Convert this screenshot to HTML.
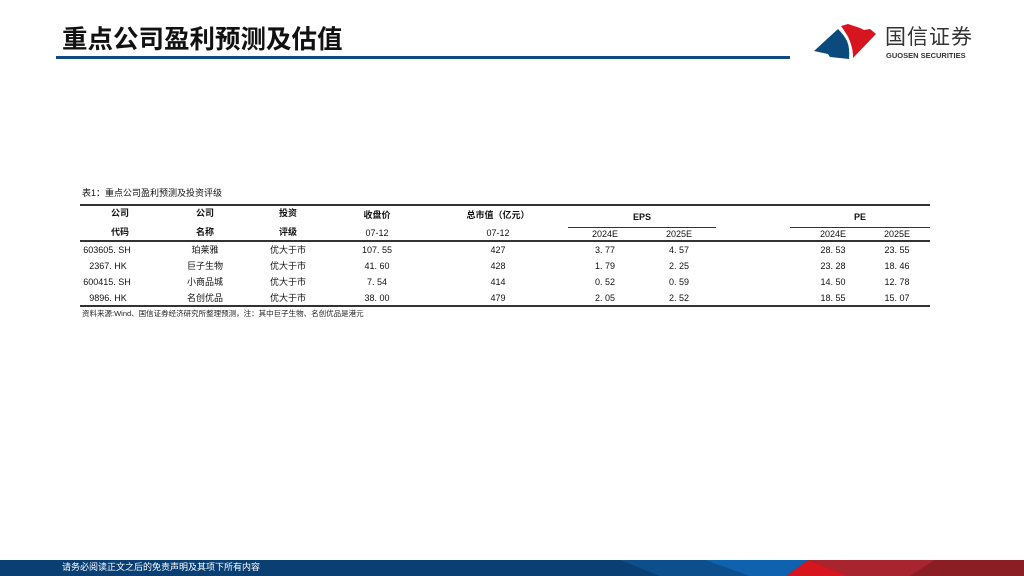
<!DOCTYPE html>
<html><head><meta charset="utf-8"><style>
body{margin:0;width:1024px;height:576px;position:relative;background:#fff;overflow:hidden;font-family:"Liberation Sans","Noto Sans CJK SC",sans-serif;}
.abs{position:absolute}
.t{position:absolute;font-size:9px;color:#111;transform:translateX(-50%);white-space:nowrap;line-height:10px}
.b{font-weight:bold}
.ln{position:absolute;background:#333}
</style></head><body>
<div class="abs" style="left:62px;top:22px;font-size:25.5px;font-weight:bold;color:#111;line-height:32px;font-family:'Noto Sans CJK SC',sans-serif;">重点公司盈利预测及估值</div>
<div class="abs" style="left:56px;top:56px;width:734px;height:3px;background:#0d4a80"></div>
<svg class="abs" style="left:805px;top:15px" width="80" height="50" viewBox="0 0 80 50">
<path d="M9 36 L33 14 Q39 20 42 26 Q45 33 44 44 L25 42 L23 39 Z" fill="#0b4a7d"/>
<path d="M36 11 L43 9 L55 13 L59 15 L65 14 L71 19 L48 43 Q48 37 47 33 Q45 25 42 20 Q39 15 36 11 Z" fill="#d7151f"/>
</svg>
<div class="abs" style="left:885px;top:23px;font-size:21px;color:#333;letter-spacing:1px;font-family:'Noto Sans CJK SC',sans-serif;line-height:26px">国信证券</div>
<div class="abs" style="left:886px;top:51px;font-size:7.5px;font-weight:bold;color:#333;line-height:9px">GUOSEN SECURITIES</div>

<div class="abs" style="left:82px;top:188px;font-size:9px;color:#111;line-height:10px">表1：重点公司盈利预测及投资评级</div>
<div class="ln" style="left:80px;top:204px;width:850px;height:1.5px"></div>
<div class="ln" style="left:568px;top:227px;width:148px;height:1px"></div>
<div class="ln" style="left:790px;top:227px;width:140px;height:1px"></div>
<div class="ln" style="left:80px;top:240px;width:850px;height:1.5px"></div>
<div class="ln" style="left:80px;top:305px;width:850px;height:1.5px"></div>

<div class="t b" style="left:120px;top:208px">公司</div><div class="t b" style="left:120px;top:227px">代码</div>
<div class="t b" style="left:205px;top:208px">公司</div><div class="t b" style="left:205px;top:227px">名称</div>
<div class="t b" style="left:288px;top:208px">投资</div><div class="t b" style="left:288px;top:227px">评级</div>
<div class="t b" style="left:377px;top:210px">收盘价</div><div class="t" style="left:377px;top:228px">07-12</div>
<div class="t b" style="left:498px;top:210px">总市值（亿元）</div><div class="t" style="left:498px;top:228px">07-12</div>
<div class="t b" style="left:642px;top:212px">EPS</div>
<div class="t b" style="left:860px;top:212px">PE</div>
<div class="t" style="left:605px;top:229px">2024E</div><div class="t" style="left:679px;top:229px">2025E</div>
<div class="t" style="left:833px;top:229px">2024E</div><div class="t" style="left:897px;top:229px">2025E</div>

<div class="t" style="left:107px;top:245px">603605. SH</div><div class="t" style="left:205px;top:245px">珀莱雅</div><div class="t" style="left:288px;top:245px">优大于市</div><div class="t" style="left:377px;top:245px">107. 55</div><div class="t" style="left:498px;top:245px">427</div><div class="t" style="left:605px;top:245px">3. 77</div><div class="t" style="left:679px;top:245px">4. 57</div><div class="t" style="left:833px;top:245px">28. 53</div><div class="t" style="left:897px;top:245px">23. 55</div>
<div class="t" style="left:108px;top:261px">2367. HK</div><div class="t" style="left:205px;top:261px">巨子生物</div><div class="t" style="left:288px;top:261px">优大于市</div><div class="t" style="left:377px;top:261px">41. 60</div><div class="t" style="left:498px;top:261px">428</div><div class="t" style="left:605px;top:261px">1. 79</div><div class="t" style="left:679px;top:261px">2. 25</div><div class="t" style="left:833px;top:261px">23. 28</div><div class="t" style="left:897px;top:261px">18. 46</div>
<div class="t" style="left:107px;top:277px">600415. SH</div><div class="t" style="left:205px;top:277px">小商品城</div><div class="t" style="left:288px;top:277px">优大于市</div><div class="t" style="left:377px;top:277px">7. 54</div><div class="t" style="left:498px;top:277px">414</div><div class="t" style="left:605px;top:277px">0. 52</div><div class="t" style="left:679px;top:277px">0. 59</div><div class="t" style="left:833px;top:277px">14. 50</div><div class="t" style="left:897px;top:277px">12. 78</div>
<div class="t" style="left:108px;top:293px">9896. HK</div><div class="t" style="left:205px;top:293px">名创优品</div><div class="t" style="left:288px;top:293px">优大于市</div><div class="t" style="left:377px;top:293px">38. 00</div><div class="t" style="left:498px;top:293px">479</div><div class="t" style="left:605px;top:293px">2. 05</div><div class="t" style="left:679px;top:293px">2. 52</div><div class="t" style="left:833px;top:293px">18. 55</div><div class="t" style="left:897px;top:293px">15. 07</div>
<div class="abs" style="left:82px;top:309px;font-size:7.5px;color:#222;line-height:9px">资料来源:Wind、国信证券经济研究所整理预测，注：其中巨子生物、名创优品是港元</div>

<div class="abs" style="left:0;top:560px;width:1024px;height:16px;background:#0a3f74"></div>
<svg class="abs" style="left:600px;top:560px" width="424" height="16">
<polygon points="20,0 208,0 186,16 60,16" fill="#0d4f8c"/>
<polygon points="105,0 208,0 186,16 150,16" fill="#0f62ae"/>
<polygon points="208,0 186,16 250,16" fill="#d7151f"/>
<polygon points="208,0 335,0 310,16 250,16" fill="#a8242e"/>
<polygon points="335,0 424,0 424,16 310,16" fill="#8a1e24"/>
</svg>
<div class="abs" style="left:62px;top:562px;font-size:9px;color:#fff;line-height:11px">请务必阅读正文之后的免责声明及其项下所有内容</div>
</body></html>
